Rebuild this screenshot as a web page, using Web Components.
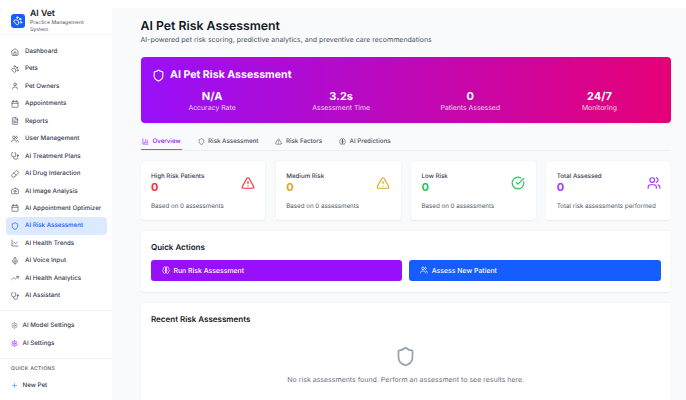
<!DOCTYPE html>
<html>
<head>
<meta charset="utf-8">
<title>AI Vet</title>
<style>
    html, body { margin: 0; height: 100%; overflow: hidden; background: #fff; }
    body { padding-top: 8px; box-sizing: border-box; font-family: Inter, "Liberation Sans", sans-serif; color: #101828; text-rendering: geometricPrecision; }
    vet-app { height: 392px; opacity: .999; }
</style>
</head>
<body>
<vet-app>
    <vet-sidebar slot="side"></vet-sidebar>
    <vet-risk-page slot="main"></vet-risk-page>
</vet-app>
<script>
const paths = {
    home: '<path d="m3 9 9-7 9 7v11a2 2 0 0 1-2 2H5a2 2 0 0 1-2-2z"/><path d="M9 22V12h6v10"/>',
    paw: '<circle cx="11" cy="4" r="2"/><circle cx="18" cy="8" r="2"/><circle cx="20" cy="16" r="2"/><path d="M9 10a5 5 0 0 1 5 5v3.5a3.5 3.5 0 0 1-6.84 1.045Q6.52 17.48 4.46 16.84A3.5 3.5 0 0 1 5.5 10Z"/>',
    user: '<path d="M19 21v-2a4 4 0 0 0-4-4H9a4 4 0 0 0-4 4v2"/><circle cx="12" cy="7" r="4"/>',
    calendar: '<rect x="3" y="4" width="18" height="18" rx="2"/><path d="M16 2v4M8 2v4M3 10h18"/>',
    file: '<path d="M15 2H6a2 2 0 0 0-2 2v16a2 2 0 0 0 2 2h12a2 2 0 0 0 2-2V7Z"/><path d="M14 2v4a2 2 0 0 0 2 2h4"/><path d="M10 9H8M16 13H8M16 17H8"/>',
    users: '<path d="M16 21v-2a4 4 0 0 0-4-4H6a4 4 0 0 0-4 4v2"/><circle cx="9" cy="7" r="4"/><path d="M22 21v-2a4 4 0 0 0-3-3.87"/><path d="M16 3.13a4 4 0 0 1 0 7.75"/>',
    stethoscope: '<path d="M4.8 2.3A.3.3 0 1 0 5 2H4a2 2 0 0 0-2 2v5a6 6 0 0 0 6 6 6 6 0 0 0 6-6V4a2 2 0 0 0-2-2h-1a.2.2 0 1 0 .3.3"/><path d="M8 15v1a6 6 0 0 0 6 6 6 6 0 0 0 6-6v-4"/><circle cx="20" cy="10" r="2"/>',
    pill: '<path d="m10.5 20.5 10-10a4.95 4.95 0 1 0-7-7l-10 10a4.95 4.95 0 1 0 7 7Z"/><path d="m8.5 8.5 7 7"/>',
    camera: '<path d="M14.5 4h-5L7 7H4a2 2 0 0 0-2 2v9a2 2 0 0 0 2 2h16a2 2 0 0 0 2-2V9a2 2 0 0 0-2-2h-3l-2.5-3z"/><circle cx="12" cy="13" r="3"/>',
    shield: '<path d="M20 13c0 5-3.5 7.5-7.66 8.95a1 1 0 0 1-.67-.01C7.5 20.5 4 18 4 13V6a1 1 0 0 1 1-1c2 0 4.5-1.2 6.24-2.72a1.17 1.17 0 0 1 1.52 0C14.51 3.81 17 5 19 5a1 1 0 0 1 1 1z"/>',
    chartLine: '<path d="M3 3v18h18"/><path d="m19 9-5 5-4-4-3 3"/>',
    chartBar: '<path d="M3 3v18h18"/><path d="M18 17V9M13 17V5M8 17v-3"/>',
    mic: '<path d="M12 2a3 3 0 0 0-3 3v7a3 3 0 0 0 6 0V5a3 3 0 0 0-3-3Z"/><path d="M19 10v2a7 7 0 0 1-14 0v-2"/><path d="M12 19v3"/>',
    trending: '<path d="M22 7l-8.5 8.5-5-5L2 17"/><path d="M16 7h6v6"/>',
    gear: '<path d="M12.22 2h-.44a2 2 0 0 0-2 2v.18a2 2 0 0 1-1 1.73l-.43.25a2 2 0 0 1-2 0l-.15-.08a2 2 0 0 0-2.73.73l-.22.38a2 2 0 0 0 .73 2.73l.15.1a2 2 0 0 1 1 1.72v.51a2 2 0 0 1-1 1.74l-.15.09a2 2 0 0 0-.73 2.73l.22.38a2 2 0 0 0 2.73.73l.15-.08a2 2 0 0 1 2 0l.43.25a2 2 0 0 1 1 1.73V20a2 2 0 0 0 2 2h.44a2 2 0 0 0 2-2v-.18a2 2 0 0 1 1-1.73l.43-.25a2 2 0 0 1 2 0l.15.08a2 2 0 0 0 2.73-.73l.22-.39a2 2 0 0 0-.73-2.73l-.15-.08a2 2 0 0 1-1-1.74v-.5a2 2 0 0 1 1-1.74l.15-.09a2 2 0 0 0 .73-2.73l-.22-.38a2 2 0 0 0-2.73-.73l-.15.08a2 2 0 0 1-2 0l-.43-.25a2 2 0 0 1-1-1.73V4a2 2 0 0 0-2-2z"/><circle cx="12" cy="12" r="3"/>',
    plus: '<path d="M5 12h14M12 5v14"/>',
    alert: '<path d="m21.73 18-8-14a2 2 0 0 0-3.48 0l-8 14A2 2 0 0 0 4 21h16a2 2 0 0 0 1.73-3"/><path d="M12 9v4M12 17h.01"/>',
    check: '<path d="M21.801 10A10 10 0 1 1 17 3.335"/><path d="m9 11 3 3L22 4"/>',
    brain: '<path d="M12 5a3 3 0 1 0-5.997.125 4 4 0 0 0-2.526 5.77 4 4 0 0 0 .556 6.588A4 4 0 1 0 12 18Z"/><path d="M12 5a3 3 0 1 1 5.997.125 4 4 0 0 1 2.526 5.77 4 4 0 0 1-.556 6.588A4 4 0 1 1 12 18Z"/><path d="M15 13a4.5 4.5 0 0 1-3-4 4.5 4.5 0 0 1-3 4"/><path d="M12 5v13"/>'
}

// every icon is a lucide style stroke svg, size comes from the attribute
class VetIcon extends HTMLElement {
    connectedCallback() {
        const size = this.getAttribute('size') || 8
        const weight = this.getAttribute('weight') || 2
        this.attachShadow({ mode: 'open' }).innerHTML = `
            <style>
                :host { display: inline-flex; flex: none; width: ${size}px; height: ${size}px; }
                svg { width: 100%; height: 100%; display: block; }
            </style>
            <svg viewBox="0 0 24 24" fill="none" stroke="currentColor" stroke-width="${weight}" stroke-linecap="round" stroke-linejoin="round">${paths[this.getAttribute('name')]}</svg>`
    }
}
customElements.define('vet-icon', VetIcon)

class VetApp extends HTMLElement {
    constructor() {
        super()
        this.attachShadow({ mode: 'open' }).innerHTML = `
            <style>
                :host { display: flex; background: #f9fafb; overflow: hidden; }
                ::slotted([slot=side]) { flex: none; }
                ::slotted([slot=main]) { flex: 1; min-width: 0; }
            </style>
            <slot name="side"></slot>
            <slot name="main"></slot>`
    }
}
customElements.define('vet-app', VetApp)

class NavItem extends HTMLElement {
    constructor() {
        super()
        const active = this.hasAttribute('active')
        const tone = this.getAttribute('tone')
        this.attachShadow({ mode: 'open' }).innerHTML = `
            <style>
                :host { display: flex; align-items: center; height: 17.45px; margin: 0 5.5px; padding: 0 5.5px; gap: var(--nav-gap, 6px);
                    border-radius: 4px; font-size: 6.2px; font-weight: 500; color: ${active ? '#155dfc' : '#364153'};
                    background: ${active ? '#dbeafe' : 'none'}; white-space: nowrap; }
                vet-icon { color: ${tone || (active ? '#155dfc' : '#4a5565')}; }
            </style>
            <vet-icon name="${this.getAttribute('icon')}" size="${this.getAttribute('size') || 8}" weight="${this.getAttribute('weight') || 2}"></vet-icon>
            <slot></slot>`
    }
}
customElements.define('nav-item', NavItem)

class VetSidebar extends HTMLElement {
    constructor() {
        super()
        const nav = [
            ['home', 'Dashboard'], ['paw', 'Pets'], ['user', 'Pet Owners'], ['calendar', 'Appointments'], ['file', 'Reports'],
            ['users', 'User Management'], ['stethoscope', 'AI Treatment Plans'], ['pill', 'AI Drug Interaction'], ['camera', 'AI Image Analysis'],
            ['calendar', 'AI Appointment Optimizer'], ['shield', 'AI Risk Assessment', true], ['chartLine', 'AI Health Trends'], ['mic', 'AI Voice Input'],
            ['trending', 'AI Health Analytics'], ['stethoscope', 'AI Assistant']
        ]
        this.attachShadow({ mode: 'open' }).innerHTML = `
            <style>
                :host { display: flex; flex-direction: column; width: 112px; height: 100%; background: #fff; border-radius: 5px 0 0 0; overflow: hidden; }
                header { display: flex; align-items: center; gap: 5px; height: 27px; box-sizing: border-box; padding: 0 20px 0 11px; border-bottom: .5px solid #f3f4f6; flex: none; }
                .logo { width: 14px; height: 14px; border-radius: 3px; background: #155dfc; color: #fff; display: flex; align-items: center; justify-content: center; flex: none; }
                h1 { margin: 0; font-size: 8.7px; line-height: 11px; font-weight: 600; color: #101828; }
                p { margin: 0; font-size: 5.2px; line-height: 7px; color: #4a5565; }
                nav { padding-top: 7.8px; padding-bottom: 5.5px; border-bottom: .5px solid #f3f4f6; flex: none; }
                .tools { --nav-gap: 4.5px; padding: 6px 0; border-bottom: .5px solid #f3f4f6; flex: none; }
                .quick { --nav-gap: 4.5px; padding-top: 7.2px; flex: none; }
                h2 { margin: 0 0 3.6px 11px; font-size: 5px; line-height: 7px; font-weight: 600; letter-spacing: .3px; color: #6a7282; }
            </style>
            <header>
                <div class="logo"><vet-icon name="paw" size="9.5" weight="2.4"></vet-icon></div>
                <div><h1>AI Vet</h1><p>Practice Management System</p></div>
            </header>
            <nav>${nav.map(([icon, label, active]) => `<nav-item icon="${icon}"${active ? ' active' : ''}>${label}</nav-item>`).join('')}</nav>
            <div class="tools">
                <nav-item icon="gear" size="7" tone="#6a7282">AI Model Settings</nav-item>
                <nav-item icon="gear" size="7" tone="#ad46ff" weight="3">AI Settings</nav-item>
            </div>
            <div class="quick">
                <h2>QUICK ACTIONS</h2>
                <nav-item icon="plus" size="7" tone="#2b7fff">New Pet</nav-item>
            </div>`
    }
}
customElements.define('vet-sidebar', VetSidebar)

class HeroStat extends HTMLElement {
    constructor() {
        super()
        this.attachShadow({ mode: 'open' }).innerHTML = `
            <style>
                :host { display: block; text-align: center; color: #fff; }
                b { display: block; font-size: 11px; line-height: 13px; font-weight: 700; }
                span { display: block; font-size: 6.9px; line-height: 9px; opacity: .8; }
            </style>
            <b>${this.getAttribute('value')}</b><span><slot></slot></span>`
    }
}
customElements.define('hero-stat', HeroStat)

class HeroBanner extends HTMLElement {
    constructor() {
        super()
        this.attachShadow({ mode: 'open' }).innerHTML = `
            <style>
                :host { display: block; height: 66px; box-sizing: border-box; padding: 11px 11px 0; border-radius: 4px; color: #fff;
                    background: linear-gradient(90deg, #9810fa, #e60076); box-shadow: 0 1px 2px rgba(0,0,0,.08); }
                h2 { display: flex; align-items: center; gap: 5.5px; margin: 0 0 7.5px; font-size: 10.6px; line-height: 14px; font-weight: 700; }
                .stats { display: grid; grid-template-columns: repeat(4, 1fr); gap: 8px; }
            </style>
            <h2><vet-icon name="shield" size="13"></vet-icon>AI Pet Risk Assessment</h2>
            <div class="stats"><slot></slot></div>`
    }
}
customElements.define('hero-banner', HeroBanner)

class TabItem extends HTMLElement {
    constructor() {
        super()
        const active = this.hasAttribute('active')
        this.attachShadow({ mode: 'open' }).innerHTML = `
            <style>
                :host { display: flex; align-items: center; gap: 3.5px; height: 16.5px; margin-bottom: -.5px; padding: 1px 1.5px 0;
                    font-size: 6.2px; font-weight: 500; white-space: nowrap; color: ${active ? '#9810fa' : '#4a5565'};
                    border-bottom: 1px solid ${active ? '#ad46ff' : 'transparent'}; box-sizing: border-box; }
            </style>
            <vet-icon name="${this.getAttribute('icon')}" size="7"></vet-icon><slot></slot>`
    }
}
customElements.define('tab-item', TabItem)

class StatCard extends HTMLElement {
    constructor() {
        super()
        this.attachShadow({ mode: 'open' }).innerHTML = `
            <style>
                :host { display: flex; flex-direction: column; height: 59px; box-sizing: border-box; padding: 11.5px 10.5px 0; background: #fff;
                    border-radius: 4px; box-shadow: 0 .5px 2px rgba(0,0,0,.07); position: relative; }
                .top { display: flex; justify-content: space-between; align-items: center; }
                .label { font-size: 6.2px; line-height: 8px; font-weight: 500; color: #364153; }
                .value { font-size: 11px; line-height: 13px; font-weight: 700; color: var(--tone); }
                .sub { margin-top: 8.5px; font-size: 6.2px; line-height: 9px; color: #4a5565; }
                vet-icon { color: var(--tone); }
            </style>
            <div class="top">
                <div><div class="label">${this.getAttribute('label')}</div><div class="value">0</div></div>
                <vet-icon name="${this.getAttribute('icon')}" size="14"></vet-icon>
            </div>
            <div class="sub"><slot></slot></div>`
        this.style.setProperty('--tone', this.getAttribute('tone'))
    }
}
customElements.define('stat-card', StatCard)

class ActionButton extends HTMLElement {
    constructor() {
        super()
        this.attachShadow({ mode: 'open' }).innerHTML = `
            <style>
                :host { display: flex; align-items: center; gap: 3.5px; height: 21px; padding: 0 11px; border-radius: 3px; color: #fff;
                    font-size: 6.9px; font-weight: 500; background: ${this.getAttribute('color')}; }
            </style>
            <vet-icon name="${this.getAttribute('icon')}" size="8"></vet-icon><slot></slot>`
    }
}
customElements.define('action-button', ActionButton)

class VetPanel extends HTMLElement {
    constructor() {
        super()
        this.attachShadow({ mode: 'open' }).innerHTML = `
            <style>
                :host { display: block; box-sizing: border-box; padding: 11px 10.5px; background: #fff; border-radius: 4px; box-shadow: 0 .5px 2px rgba(0,0,0,.07); }
                h3 { margin: 0; font-size: 8px; line-height: 11px; font-weight: 600; color: #101828; }
            </style>
            <h3>${this.getAttribute('heading')}</h3>
            <slot></slot>`
    }
}
customElements.define('vet-panel', VetPanel)

class VetRiskPage extends HTMLElement {
    constructor() {
        super()
        this.attachShadow({ mode: 'open' }).innerHTML = `
            <style>
                :host { display: block; padding: 11px 15px 0 28.5px; box-sizing: border-box; overflow: hidden; }
                h1 { margin: 0; font-size: 12.3px; line-height: 14px; font-weight: 600; color: #101828; }
                .sub { margin: 2px 0 12px; font-size: 7px; line-height: 10px; color: #4a5565; }
                .tabs { display: flex; gap: 14px; margin-top: 10.5px; padding-bottom: 0; border-bottom: .5px solid #eceef1; }
                .cards { display: grid; grid-template-columns: repeat(4, 1fr); gap: 10.5px; margin: 10.5px 0 11px; }
                .actions { display: grid; grid-template-columns: 1fr 1fr; gap: 7px; margin-top: 6.5px; }
                .quick { height: 61px; margin-bottom: 10.5px; }
                .empty { display: flex; flex-direction: column; align-items: center; margin-top: 21px; color: #6a7282; font-size: 7px; line-height: 9px; gap: 8px; height: 100px; }
                .empty vet-icon { color: #99a1af; }
            </style>
            <h1>AI Pet Risk Assessment</h1>
            <p class="sub">AI-powered pet risk scoring, predictive analytics, and preventive care recommendations</p>
            <hero-banner>
                <hero-stat value="N/A">Accuracy Rate</hero-stat>
                <hero-stat value="3.2s">Assessment Time</hero-stat>
                <hero-stat value="0">Patients Assessed</hero-stat>
                <hero-stat value="24/7">Monitoring</hero-stat>
            </hero-banner>
            <div class="tabs">
                <tab-item icon="chartBar" active>Overview</tab-item>
                <tab-item icon="shield">Risk Assessment</tab-item>
                <tab-item icon="alert">Risk Factors</tab-item>
                <tab-item icon="brain">AI Predictions</tab-item>
            </div>
            <div class="cards">
                <stat-card label="High Risk Patients" icon="alert" tone="#fb2c36">Based on 0 assessments</stat-card>
                <stat-card label="Medium Risk" icon="alert" tone="#e0a526">Based on 0 assessments</stat-card>
                <stat-card label="Low Risk" icon="check" tone="#22c55e">Based on 0 assessments</stat-card>
                <stat-card label="Total Assessed" icon="users" tone="#a835ff">Total risk assessments performed</stat-card>
            </div>
            <vet-panel class="quick" heading="Quick Actions">
                <div class="actions">
                    <action-button icon="brain" color="#9810fa">Run Risk Assessment</action-button>
                    <action-button icon="users" color="#155dfc">Assess New Patient</action-button>
                </div>
            </vet-panel>
            <vet-panel heading="Recent Risk Assessments">
                <div class="empty">
                    <vet-icon name="shield" size="21"></vet-icon>
                    <span>No risk assessments found. Perform an assessment to see results here.</span>
                </div>
            </vet-panel>`
    }
}
customElements.define('vet-risk-page', VetRiskPage)
</script>
</body>
</html>
